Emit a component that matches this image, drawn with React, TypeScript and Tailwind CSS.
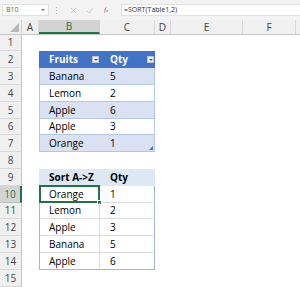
import { ChevronDown } from 'lucide-react';

const COLS = [
  { key: 'A', w: 'w-[17px]' },
  { key: 'B', w: 'w-[61px]' },
  { key: 'C', w: 'w-[55px]' },
  { key: 'D', w: 'w-[16px]' },
  { key: 'E', w: 'w-[72px]' },
  { key: 'F', w: 'w-[53px]' },
];

const ROW_H = [
  'h-[16px]', 'h-[17px]', 'h-[17px]', 'h-[17px]', 'h-[17px]',
  'h-[16px]', 'h-[17px]', 'h-[17px]', 'h-[17px]', 'h-[17px]',
  'h-[16px]', 'h-[17px]', 'h-[17px]', 'h-[17px]', 'h-[17px]',
];

const fruits = [
  ['Banana', '5'],
  ['Lemon', '2'],
  ['Apple', '6'],
  ['Apple', '3'],
  ['Orange', '1'],
];

const sorted = [
  ['Orange', '1'],
  ['Lemon', '2'],
  ['Apple', '3'],
  ['Banana', '5'],
  ['Apple', '6'],
];

const FilterButton = () => (
  <span className="ml-auto mr-[1px] flex h-[7px] w-[7px] items-center justify-center border border-[#b7c3d8] bg-[#f4f6fa]">
    <span className="h-0 w-0 border-l-[2px] border-r-[2px] border-t-[2px] border-l-transparent border-r-transparent border-t-[#555]" />
  </span>
);

const FormulaBar = () => (
  <div className="flex h-[20px] items-center bg-[#f3f3f3] pl-[2px]">
    <div className="flex h-[12px] w-[47px] items-center justify-between border border-[#e1e1e1] bg-white pl-[3px] pr-[3px] text-[7px] text-[#666]">
      <span>B10</span>
      <span className="h-0 w-0 border-l-[2px] border-r-[2px] border-t-[2px] border-l-transparent border-r-transparent border-t-[#777]" />
    </div>
    <div className="ml-[7px] flex flex-col gap-[2px]">
      <span className="h-[1px] w-[1px] bg-[#bbb]" />
      <span className="h-[1px] w-[1px] bg-[#bbb]" />
      <span className="h-[1px] w-[1px] bg-[#bbb]" />
    </div>
    <div className="ml-[13px] flex w-[46px] items-center text-[#c8c8c8]">
      <svg width="7" height="7" viewBox="0 0 7 7" className="ml-[0px]">
        <path d="M1 1 L6 6 M6 1 L1 6" stroke="#c4c4c4" strokeWidth="0.9" />
      </svg>
      <svg width="8" height="7" viewBox="0 0 8 7" className="ml-[9px]">
        <path d="M1 4 L3 6 L7 1" stroke="#c4c4c4" strokeWidth="0.9" fill="none" />
      </svg>
      <span className="ml-[10px] text-[7px] italic text-[#777]" style={{ fontFamily: '"Liberation Serif", serif' }}>
        f<span className="text-[5px]">x</span>
      </span>
    </div>
    <div className="ml-[5px] flex h-[12px] flex-1 items-center border border-r-0 border-[#e1e1e1] bg-white pl-[2px] text-[7px] text-[#333]">
      =SORT(Table1,2)
    </div>
  </div>
);

const ColumnHeader = () => (
  <div className="flex h-[15px] border-b border-[#c6c6c6] bg-[#f0f0f0] text-[10px] text-[#444]">
    <div className="relative w-[22px] border-r border-[#d0d0d0]">
      <span className="absolute bottom-[2px] right-[2px] h-0 w-0 border-b-[9px] border-l-[9px] border-b-[#b9b9b9] border-l-transparent" />
    </div>
    {COLS.map((c) =>
      c.key === 'B' ? (
        <div
          key={c.key}
          className={`${c.w} flex items-center justify-center border-b-2 border-r border-b-[#217346] border-r-[#d0d0d0] bg-[#d3d3d3] text-[#217346]`}
        >
          {c.key}
        </div>
      ) : (
        <div key={c.key} className={`${c.w} flex items-center justify-center border-r border-[#d8d8d8]`}>
          {c.key}
        </div>
      )
    )}
    <div className="flex-1" />
  </div>
);

const RowHeader = ({ n }: { n: number }) => {
  const active = n === 10;
  return (
    <div
      className={`flex w-[22px] shrink-0 items-center justify-center border-b border-r ${
        active
          ? 'border-b-[#c0c0c0] border-r-2 border-r-[#217346] bg-[#d3d3d3] text-[#217346]'
          : 'border-b-[#d8d8d8] border-r-[#c6c6c6] bg-[#f0f0f0] text-[#444]'
      }`}
    >
      {n}
    </div>
  );
};

const Cells = ({ n }: { n: number }) => {
  // table 1 header
  if (n === 2) {
    return (
      <>
        <div className="flex w-[61px] items-center bg-[#4472c4] pl-[10px] font-bold text-white">
          Fruits
          <FilterButton />
        </div>
        <div className="flex w-[55px] items-center bg-[#4472c4] pl-[10px] font-bold text-white">
          Qty
          <FilterButton />
        </div>
      </>
    );
  }
  if (n >= 3 && n <= 7) {
    const [f, q] = fruits[n - 3];
    const band = n % 2 === 1 ? 'bg-[#d9e1f2]' : 'bg-white';
    return (
      <>
        <div className={`flex w-[61px] items-center border-b border-l border-[#b4c6e7] pl-[9px] ${band}`}>{f}</div>
        <div className={`relative flex w-[55px] items-center border-b border-r border-[#b4c6e7] pl-[10px] ${band}`}>
          {q}
          {n === 7 && (
            <span className="absolute bottom-[1px] right-[1px] h-0 w-0 border-b-[4px] border-l-[4px] border-b-[#4472c4] border-l-transparent" />
          )}
        </div>
      </>
    );
  }
  if (n === 9) {
    return (
      <>
        <div className="flex w-[61px] items-center bg-[#dde8f5] pl-[10px] font-bold">Sort A-&gt;Z</div>
        <div className="flex w-[55px] items-center border-r border-[#dde8f5] bg-[#dde8f5] pl-[10px] font-bold">Qty</div>
      </>
    );
  }
  if (n >= 10 && n <= 14) {
    const [f, q] = sorted[n - 10];
    const last = n === 14;
    return (
      <>
        <div
          className={`relative flex w-[61px] items-center border-l border-r border-l-[#9fb6de] border-r-[#dcdcdc] pl-[9px] ${
            last ? 'border-b border-b-[#9fb6de]' : 'border-b border-b-[#dcdcdc]'
          }`}
        >
          {f}
          {n === 10 && (
            <>
              <span className="absolute -left-[1px] -top-[1px] bottom-[-1px] right-[-1px] border-2 border-[#217346]" />
              <span className="absolute -bottom-[3px] -right-[3px] h-[5px] w-[5px] border border-white bg-[#217346]" />
            </>
          )}
        </div>
        <div
          className={`flex w-[55px] items-center border-r border-r-[#9fb6de] pl-[10px] ${
            last ? 'border-b border-b-[#9fb6de]' : 'border-b border-b-[#dcdcdc]'
          }`}
        >
          {q}
        </div>
      </>
    );
  }
  return (
    <>
      <div className="w-[61px]" />
      <div className="w-[55px]" />
    </>
  );
};

export default function App() {
  return (
    <div
      className="h-[287px] w-[300px] overflow-hidden bg-white text-[10px] text-black"
      style={{ fontFamily: '"Open Sans", sans-serif' }}
    >
      <FormulaBar />
      <ColumnHeader />
      {ROW_H.map((h, i) => {
        const n = i + 1;
        return (
          <div key={n} className={`flex ${h}`}>
            <RowHeader n={n} />
            <div className="w-[17px] shrink-0" />
            <Cells n={n} />
            <div className="flex-1" />
          </div>
        );
      })}
    </div>
  );
}
